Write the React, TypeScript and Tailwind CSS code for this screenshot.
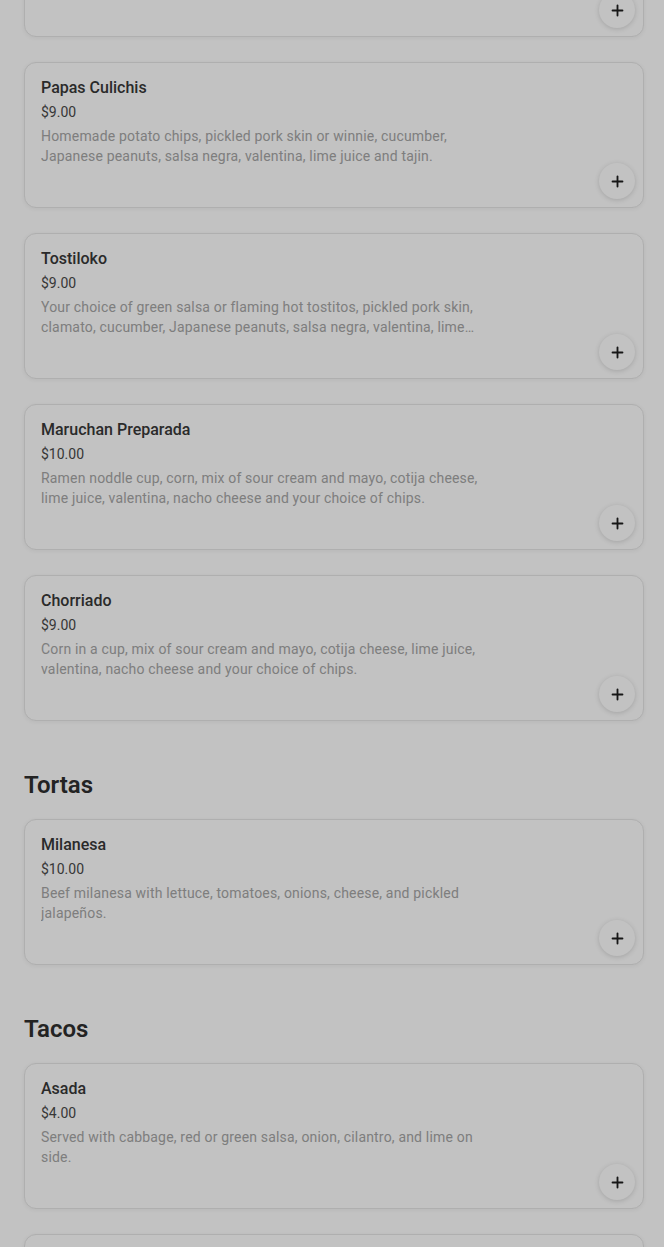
import React from 'react';
import { Plus } from 'lucide-react';

interface MenuItem {
  name: string;
  price: string;
  description: string;
}

interface MenuSection {
  title?: string;
  items: MenuItem[];
}

const sections: MenuSection[] = [
  {
    items: [
      {
        name: 'Elote Preparado',
        price: '$8.00',
        description:
          'Corn on the cob with mayo, cotija cheese, lime juice, valentina and tajin.',
      },
      {
        name: 'Papas Culichis',
        price: '$9.00',
        description:
          'Homemade potato chips, pickled pork skin or winnie, cucumber, Japanese peanuts, salsa negra, valentina, lime juice and tajin.',
      },
      {
        name: 'Tostiloko',
        price: '$9.00',
        description:
          'Your choice of green salsa or flaming hot tostitos, pickled pork skin, clamato, cucumber, Japanese peanuts, salsa negra, valentina, lime juice and tajin.',
      },
      {
        name: 'Maruchan Preparada',
        price: '$10.00',
        description:
          'Ramen noddle cup, corn, mix of sour cream and mayo, cotija cheese, lime juice, valentina, nacho cheese and your choice of chips.',
      },
      {
        name: 'Chorriado',
        price: '$9.00',
        description:
          'Corn in a cup, mix of sour cream and mayo, cotija cheese, lime juice, valentina, nacho cheese and your choice of chips.',
      },
    ],
  },
  {
    title: 'Tortas',
    items: [
      {
        name: 'Milanesa',
        price: '$10.00',
        description:
          'Beef milanesa with lettuce, tomatoes, onions, cheese, and pickled jalapeños.',
      },
    ],
  },
  {
    title: 'Tacos',
    items: [
      {
        name: 'Asada',
        price: '$4.00',
        description:
          'Served with cabbage, red or green salsa, onion, cilantro, and lime on side.',
      },
      {
        name: 'Pastor',
        price: '$4.00',
        description:
          'Served with cabbage, red or green salsa, onion, cilantro, and lime on side.',
      },
    ],
  },
];

const ItemCard: React.FC<{ item: MenuItem }> = ({ item }) => (
  <div className="flex h-[146px] rounded-xl border border-[#e6e6e6] bg-white shadow-[0_1px_4px_rgba(0,0,0,0.06)]">
    <div className="flex-1 pl-4 pt-3">
      <h4 className="mt-px text-base leading-6 font-medium text-[#383838]">{item.name}</h4>
      <p className="mt-[2px] text-sm leading-5 text-[#4a4a4a]">{item.price}</p>
      <p className="mt-1 max-w-[445px] text-sm leading-5 tracking-[0.18px] text-[#a6a6a6] line-clamp-2">
        {item.description}
      </p>
    </div>
    <div className="flex items-end pr-2 pb-2">
      <button
        type="button"
        className="flex h-9 w-9 items-center justify-center rounded-full bg-white text-[#1f1f1f] shadow-[0_1px_5px_rgba(0,0,0,0.16)]"
      >
        <Plus size={17} strokeWidth={2.6} />
      </button>
    </div>
  </div>
);

export default function App() {
  return (
    <div className="min-h-screen bg-white font-['Roboto','Liberation_Sans',sans-serif]">
      <main className="-mt-[109px] pl-6 pr-5 pb-10">
        {sections.map((section, i) => (
          <section key={i} className={section.title ? 'mt-12' : ''}>
            {section.title && (
              <h2 className="mb-[18px] text-2xl leading-8 font-semibold text-[#2e2e2e]">
                {section.title}
              </h2>
            )}
            <div className="flex flex-col gap-[25px]">
              {section.items.map((item) => (
                <ItemCard key={item.name} item={item} />
              ))}
            </div>
          </section>
        ))}
      </main>

      {/* modal backdrop */}
      <div className="fixed inset-0 z-10 bg-black/[0.24]" />
    </div>
  );
}
